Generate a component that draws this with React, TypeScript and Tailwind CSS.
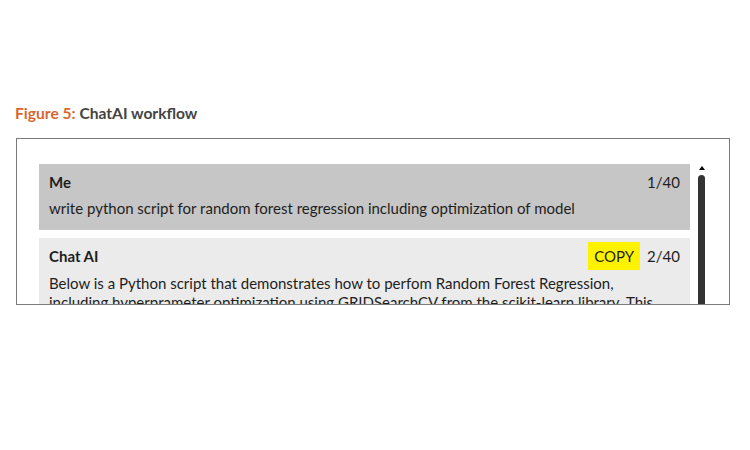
import React from "react";

export default function App() {
  const font = { fontFamily: "Lato, 'Open Sans', sans-serif" };
  return (
    <div className="w-[750px] h-[450px] bg-white relative overflow-hidden" style={font}>
      <div className="pt-[104px] pl-[15px] text-[15.6px] font-bold leading-[18px]">
        <span className="text-[#d8672f]">Figure 5:</span>{" "}
        <span className="text-[#444444]">ChatAI workflow</span>
      </div>
      <div className="mt-[16px] ml-[16px] w-[714px] h-[167px] border border-[#7a7a7a] overflow-hidden flex pt-[25px] pl-[22px]">
        <div className="w-[651px] flex flex-col gap-[8px]">
          <div className="shrink-0 bg-[#c6c6c6] h-[66px] px-[10px] pt-[9px] text-[#1e1e1e]">
            <div className="flex justify-between text-[15px] leading-[18px]">
              <span className="font-bold">Me</span>
              <span>1/40</span>
            </div>
            <div className="mt-[8px] text-[15px] leading-[18px]">
              write python script for random forest regression including optimization of model
            </div>
          </div>
          <div className="shrink-0 bg-[#ebebeb] px-[10px] pt-[4px] text-[#1e1e1e]">
            <div className="flex justify-end items-center text-[15px] leading-[18px]">
              <span className="mr-auto font-bold">Chat AI</span>
              <span className="bg-[#fff200] px-[6px] h-[28px] flex items-center">COPY</span>
              <span className="ml-[7px]">2/40</span>
            </div>
            <div className="mt-[4px] text-[15px] leading-[19px] whitespace-nowrap">
              Below is a Python script that demonstrates how to perfom Random Forest Regression,
              <br />
              including hyperprameter optimization using GRIDSearchCV from the scikit-learn library. This
            </div>
          </div>
        </div>
        <div className="ml-[8px] flex flex-col items-center w-[7px]">
          <div className="mt-[2px] w-0 h-0 border-l-[3px] border-r-[3px] border-b-[4px] border-l-transparent border-r-transparent border-b-black" />
          <div className="mt-[5px] w-[7px] flex-1 bg-[#333] rounded-t-full" />
        </div>
      </div>
    </div>
  );
}
